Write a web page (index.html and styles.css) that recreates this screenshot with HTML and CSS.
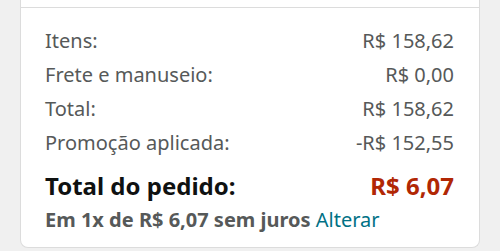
FILE: index.html
```html
<!DOCTYPE html>
<html lang="pt-BR">
<head>
  <meta charset="UTF-8">
  <meta name="viewport" content="width=device-width, initial-scale=1.0">
  <title>Resumo do pedido</title>
  <link rel="stylesheet" href="styles.css">
</head>
<body>
  <div class="card">
    <div class="card-prev"></div>
    <div class="summary">
      <div class="row">
        <span>Itens:</span>
        <span>R$ 158,62</span>
      </div>
      <div class="row">
        <span>Frete e manuseio:</span>
        <span>R$ 0,00</span>
      </div>
      <div class="row">
        <span>Total:</span>
        <span>R$ 158,62</span>
      </div>
      <div class="row">
        <span>Promoção aplicada:</span>
        <span>-R$ 152,55</span>
      </div>
      <div class="row total">
        <span>Total do pedido:</span>
        <span class="price">R$ 6,07</span>
      </div>
      <div class="installments">
        Em 1x de R$ 6,07 sem juros <a href="#" class="link">Alterar</a>
      </div>
    </div>
  </div>
</body>
</html>
```

FILE: styles.css
```css
body {
  margin: 0;
  background: #f0f0f0;
  font-family: "Noto Sans", "Open Sans", sans-serif;
}
.card {
  margin: 0 20px;
  background: #fff;
  border: 1px solid #dcdcdc;
  border-top: none;
  border-radius: 0 0 8px 8px;
}
.card-prev {
  height: 7px;
  border-bottom: 1px solid #dcdcdc;
}
.summary {
  padding: 16px 25px 12px 24px;
}
.row {
  display: flex;
  justify-content: space-between;
  font-size: 20px;
  line-height: 34px;
  color: #565959;
}
.row.total {
  margin-top: 9px;
  font-size: 24px;
  font-weight: bold;
  color: #0f1111;
}
.price {
  color: #b12704;
}
.installments {
  margin-top: 2px;
  font-size: 20px;
  font-weight: bold;
  line-height: 30px;
  color: #565959;
}
.link {
  color: #007185;
  font-weight: normal;
  text-decoration: none;
}
```
